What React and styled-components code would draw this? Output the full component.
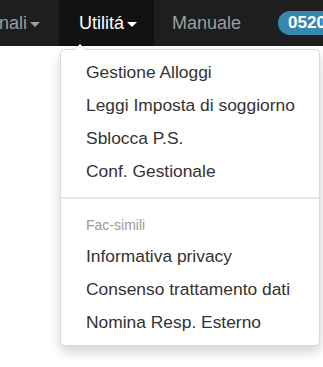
import React from 'react'
import styled, { createGlobalStyle } from 'styled-components'

const GlobalStyle = createGlobalStyle`
  body {
    margin: 0;
    background: #fff;
    font-family: "Liberation Sans", Arial, sans-serif;
  }
`

const Page = styled.div`
  width: 323px;
  height: 367px;
  overflow: hidden;
  background: #fff;
`

const Navbar = styled.nav`
  height: 46px;
  background: #1e1e1e;
  display: flex;
  align-items: stretch;
  white-space: nowrap;
`

const NavItem = styled.div`
  position: relative;
  display: flex;
  align-items: center;
  padding: ${p => p.$pad || '0 20px'};
  font-size: 18px;
  color: ${p => (p.$active ? '#fff' : '#9d9d9d')};
  background: ${p => (p.$active ? '#111' : 'transparent')};
`

const Caret = styled.span`
  display: inline-block;
  width: 0;
  height: 0;
  margin-left: 3px;
  margin-top: 2px;
  border-top: 5px solid currentColor;
  border-left: 5px solid transparent;
  border-right: 5px solid transparent;
`

const Badge = styled.span`
  display: inline-block;
  margin-left: 17px;
  align-self: center;
  background: #3a87ad;
  color: #fff;
  font-weight: bold;
  font-size: 17px;
  padding: 2px 12px 2px 10px;
  border-radius: 12px;
`

const Menu = styled.div`
  position: absolute;
  top: 49px;
  left: 1px;
  width: 258px;
  background: #fff;
  border: 1px solid rgba(0, 0, 0, 0.15);
  border-radius: 5px;
  box-shadow: 0 6px 12px rgba(0, 0, 0, 0.175);
  padding: 6px 0 6px;
  color: #333;
  z-index: 10;

  &::before {
    content: '';
    position: absolute;
    top: -7px;
    left: 12px;
    border-left: 7px solid transparent;
    border-right: 7px solid transparent;
    border-bottom: 7px solid rgba(0, 0, 0, 0.15);
  }
  &::after {
    content: '';
    position: absolute;
    top: -6px;
    left: 13px;
    border-left: 6px solid transparent;
    border-right: 6px solid transparent;
    border-bottom: 6px solid #fff;
  }
`

const MenuItem = styled.a`
  display: block;
  padding: 0 25px;
  height: 33px;
  line-height: 33px;
  font-size: 17.4px;
  color: #333;
  text-decoration: none;
`

const Divider = styled.div`
  height: 2px;
  margin: 9px 0 10px;
  background: #e5e5e5;
`

const Header = styled.div`
  padding: 0 25px;
  height: 31px;
  line-height: 32px;
  font-size: 14px;
  color: #999;
`

export default function App() {
  return (
    <Page>
      <GlobalStyle />
      <Navbar>
        <NavItem $pad="0 19px 0 0" style={{ marginLeft: -11 }}>
          onali<Caret />
        </NavItem>
        <NavItem $active $pad="0 17px 0 20px">
          Utilitá<Caret />
          <Menu>
            <MenuItem>Gestione Alloggi</MenuItem>
            <MenuItem>Leggi Imposta di soggiorno</MenuItem>
            <MenuItem>Sblocca P.S.</MenuItem>
            <MenuItem>Conf. Gestionale</MenuItem>
            <Divider />
            <Header>Fac-simili</Header>
            <MenuItem>Informativa privacy</MenuItem>
            <MenuItem>Consenso trattamento dati</MenuItem>
            <MenuItem>Nomina Resp. Esterno</MenuItem>
          </Menu>
        </NavItem>
        <NavItem $pad="0 20px 0 18px">Manuale</NavItem>
        <Badge>0520</Badge>
      </Navbar>
    </Page>
  )
}
